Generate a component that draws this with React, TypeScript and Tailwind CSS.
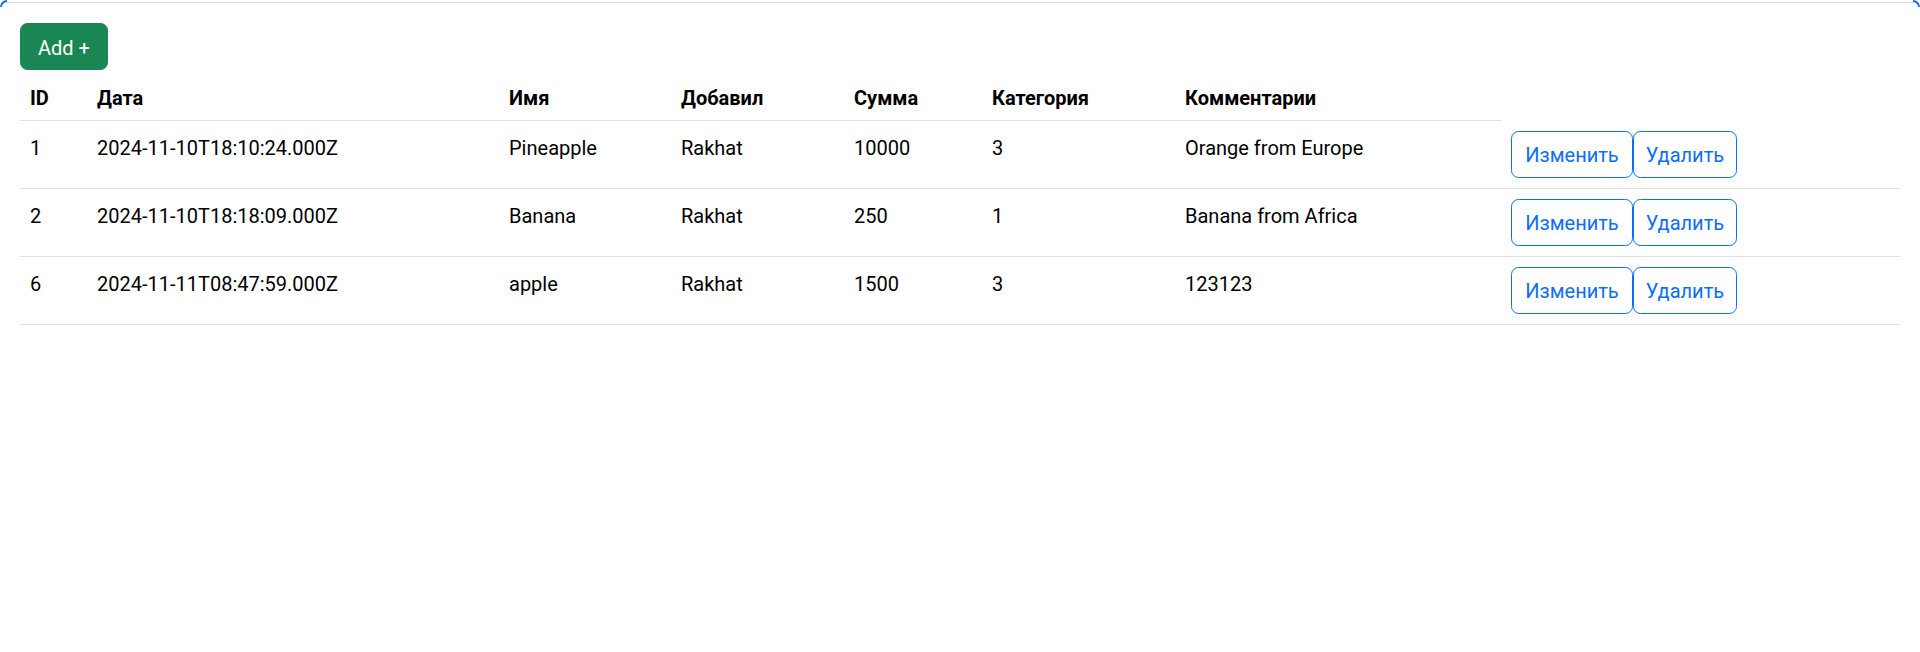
import React from "react";

const rows = [
  { id: "1", date: "2024-11-10T18:10:24.000Z", name: "Pineapple", by: "Rakhat", sum: "10000", cat: "3", comment: "Orange from Europe" },
  { id: "2", date: "2024-11-10T18:18:09.000Z", name: "Banana", by: "Rakhat", sum: "250", cat: "1", comment: "Banana from Africa" },
  { id: "6", date: "2024-11-11T08:47:59.000Z", name: "apple", by: "Rakhat", sum: "1500", cat: "3", comment: "123123" },
];

const headers = ["ID", "Дата", "Имя", "Добавил", "Сумма", "Категория", "Комментарии"];

function Cell({ children }: { children: React.ReactNode }) {
  return (
    <td className="border-b border-[#dee2e6] px-[10px] pt-[12px] pb-[8px] align-top">{children}</td>
  );
}

export default function App() {
  return (
    <div
      className="relative min-h-[652px] bg-white text-black"
      style={{ fontFamily: 'Roboto, "Noto Sans", sans-serif' }}
    >
      <div className="absolute left-0 top-0 h-[7px] w-[7px] rounded-tl-[7px] border-l-2 border-t-2 border-[#1a6ee8]" />
      <div className="absolute right-0 top-0 h-[7px] w-[7px] rounded-tr-[7px] border-r-2 border-t-2 border-[#1a6ee8]" />
      <div className="pt-[2px]">
        <div className="mx-[4px] border-t border-[#dcdcdc]" />
        <div className="px-[20px] pt-[20px]">
          <button className="flex h-[47px] w-[88px] items-center justify-center rounded-[7.5px] border border-[#198754] bg-[#198754] pt-[2px] text-[20px] leading-[30px] text-white">
            Add +
          </button>
          <table className="w-[1880px] table-fixed border-collapse text-[20px] leading-[30px]">
            <colgroup>
              <col className="w-[67px]" />
              <col className="w-[412px]" />
              <col className="w-[172px]" />
              <col className="w-[173px]" />
              <col className="w-[138px]" />
              <col className="w-[193px]" />
              <col className="w-[326px]" />
              <col className="w-[399px]" />
            </colgroup>
            <thead>
              <tr>
                {headers.map((h) => (
                  <th
                    key={h}
                    className="border-b border-[#dee2e6] px-[10px] pt-[13px] pb-[7px] text-left align-top font-bold"
                  >
                    {h}
                  </th>
                ))}
              </tr>
            </thead>
            <tbody>
              {rows.map((r) => (
                <tr key={r.id}>
                  <Cell>{r.id}</Cell>
                  <Cell>{r.date}</Cell>
                  <Cell>{r.name}</Cell>
                  <Cell>{r.by}</Cell>
                  <Cell>{r.sum}</Cell>
                  <Cell>{r.cat}</Cell>
                  <Cell>{r.comment}</Cell>
                  <td className="border-b border-[#dee2e6] p-[10px] align-top">
                    <div className="flex">
                      <button className="flex h-[47px] w-[122px] items-center justify-center rounded-[7.5px] border border-[#0d6efd] pt-[2px] text-[20px] leading-[30px] text-[#0d6efd]">
                        Изменить
                      </button>
                      <button className="flex h-[47px] w-[104px] items-center justify-center rounded-[7.5px] border border-[#0d6efd] pt-[2px] text-[20px] leading-[30px] text-[#0d6efd]">
                        Удалить
                      </button>
                    </div>
                  </td>
                </tr>
              ))}
            </tbody>
          </table>
        </div>
      </div>
    </div>
  );
}
